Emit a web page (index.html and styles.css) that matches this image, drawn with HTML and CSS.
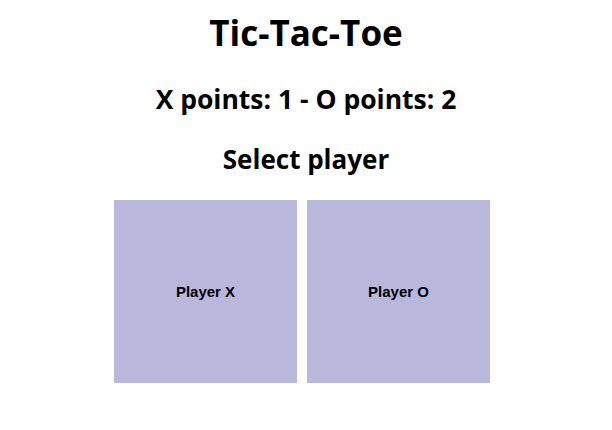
FILE: index.html
```html
<!DOCTYPE html>
<html lang="en">
<head>
  <meta charset="UTF-8" />
  <title>Tic-Tac-Toe</title>
  <link rel="stylesheet" href="styles.css">
</head>
<body>
  <h1>Tic-Tac-Toe</h1>
  <h2 class="score">X points: 1 - O points: 2</h2>
  <h2 class="select">Select player</h2>
  <div class="players">
    <button class="player">Player X</button>
    <button class="player">Player O</button>
  </div>
</body>
</html>
```
FILE: styles.css
```css
body {
  font-family: "Open Sans", "Noto Sans", sans-serif;
  margin: 0;
  background-color: #fff;
  color: #000;
  text-align: center;
}

h1 {
  font-size: 35px;
  line-height: 44px;
  margin: 11px 0 0;
}

h2 {
  font-size: 26.5px;
  line-height: 32px;
}

.score {
  margin: 28px 0 0;
}

.select {
  margin: 28px 0 0;
  font-size: 26px;
}

.players {
  display: flex;
  justify-content: center;
  gap: 10px;
  margin-top: 25px;
  padding-right: 8px;
}

.player {
  width: 183px;
  height: 183px;
  border: none;
  background-color: #b9b7dc;
  font-family: "Liberation Sans", Arial, sans-serif;
  font-size: 15px;
  font-weight: bold;
  color: #000;
  padding: 0;
  cursor: pointer;
}
```
